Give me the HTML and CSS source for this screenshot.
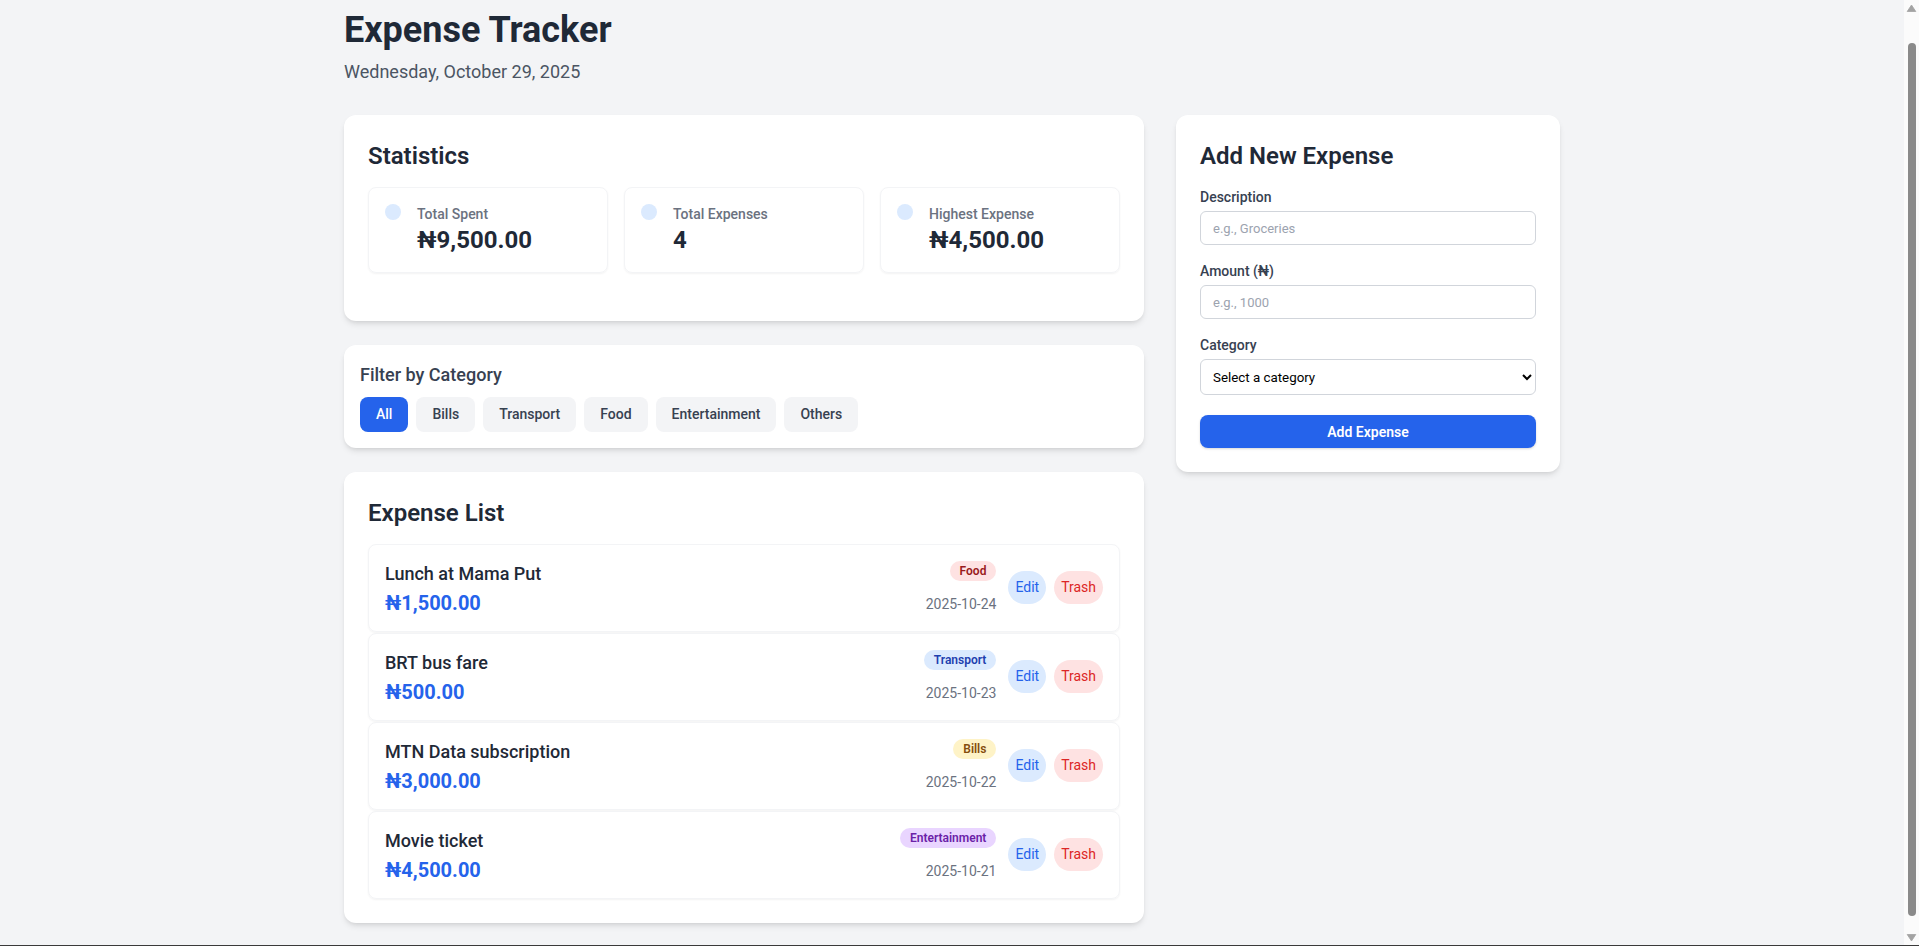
FILE: index.html
```html
<!DOCTYPE html>
<html lang="en">
<head>
<meta charset="utf-8">
<title>Expense Tracker</title>
<link rel="stylesheet" href="styles.css">
</head>
<body>
<div class="page">
  <header class="header">
    <h1 class="title">Expense Tracker</h1>
    <p class="subtitle">Wednesday, October 29, 2025</p>
  </header>
  <div class="layout">
    <div class="main-col">
      <section class="card stats-card">
        <h2 class="card-title">Statistics</h2>
        <div class="stats-grid">
          <div class="stat"><span class="stat-dot"></span><div><div class="stat-label">Total Spent</div><div class="stat-value">₦9,500.00</div></div></div>
          <div class="stat"><span class="stat-dot"></span><div><div class="stat-label">Total Expenses</div><div class="stat-value">4</div></div></div>
          <div class="stat"><span class="stat-dot"></span><div><div class="stat-label">Highest Expense</div><div class="stat-value">₦4,500.00</div></div></div>
        </div>
      </section>
      <section class="card filter-card">
        <h3 class="filter-title">Filter by Category</h3>
        <div class="filters">
          <button class="chip active">All</button>
          <button class="chip">Bills</button>
          <button class="chip">Transport</button>
          <button class="chip">Food</button>
          <button class="chip">Entertainment</button>
          <button class="chip">Others</button>
        </div>
      </section>
      <section class="card list-card">
        <h2 class="card-title">Expense List</h2>
        <div class="items">
          <div class="item">
            <div><div class="item-name">Lunch at Mama Put</div><div class="item-amount">₦1,500.00</div></div>
            <div class="item-right">
              <div class="item-meta"><span class="badge badge-food">Food</span><span class="item-date">2025-10-24</span></div>
              <div class="actions"><button class="act act-edit">Edit</button><button class="act act-trash">Trash</button></div>
            </div>
          </div>
          <div class="item">
            <div><div class="item-name">BRT bus fare</div><div class="item-amount">₦500.00</div></div>
            <div class="item-right">
              <div class="item-meta"><span class="badge badge-transport">Transport</span><span class="item-date">2025-10-23</span></div>
              <div class="actions"><button class="act act-edit">Edit</button><button class="act act-trash">Trash</button></div>
            </div>
          </div>
          <div class="item">
            <div><div class="item-name">MTN Data subscription</div><div class="item-amount">₦3,000.00</div></div>
            <div class="item-right">
              <div class="item-meta"><span class="badge badge-bills">Bills</span><span class="item-date">2025-10-22</span></div>
              <div class="actions"><button class="act act-edit">Edit</button><button class="act act-trash">Trash</button></div>
            </div>
          </div>
          <div class="item">
            <div><div class="item-name">Movie ticket</div><div class="item-amount">₦4,500.00</div></div>
            <div class="item-right">
              <div class="item-meta"><span class="badge badge-ent">Entertainment</span><span class="item-date">2025-10-21</span></div>
              <div class="actions"><button class="act act-edit">Edit</button><button class="act act-trash">Trash</button></div>
            </div>
          </div>
        </div>
      </section>
    </div>
    <aside class="card form-card">
      <h2 class="card-title">Add New Expense</h2>
      <div class="field">
        <label class="label" for="desc">Description</label>
        <input class="input" id="desc" type="text" placeholder="e.g., Groceries">
      </div>
      <div class="field">
        <label class="label" for="amt">Amount (₦)</label>
        <input class="input" id="amt" type="number" placeholder="e.g., 1000">
      </div>
      <div class="field field-last">
        <label class="label" for="cat">Category</label>
        <select class="input select" id="cat">
          <option>Select a category</option>
          <option>Food</option>
          <option>Transport</option>
          <option>Bills</option>
          <option>Entertainment</option>
          <option>Others</option>
        </select>
      </div>
      <button class="submit">Add Expense</button>
    </aside>
  </div>
</div>
<div class="scrollbar" aria-hidden="true">
  <svg class="sb-arrow" width="15" height="17" viewBox="0 0 15 17"><path d="M7.5 5 L11.8 11.5 L3.2 11.5 Z" fill="#a3a3a3" stroke="#a3a3a3" stroke-width="0.8" stroke-linejoin="round"/></svg>
  <div class="sb-track"><div class="sb-thumb"></div></div>
  <svg class="sb-arrow" width="15" height="17" viewBox="0 0 15 17"><path d="M7.5 12 L11.8 5.5 L3.2 5.5 Z" fill="#a3a3a3" stroke="#a3a3a3" stroke-width="0.8" stroke-linejoin="round"/></svg>
</div>
<div class="frame-line" aria-hidden="true"></div>
</body>
</html>
```

FILE: styles.css
```css
* { box-sizing: border-box; }
html, body { margin: 0; }
html { overflow: hidden; }
body {
  background: #f3f4f6;
  font-family: "Roboto", "Liberation Sans", sans-serif;
  color: #1f2937;
  padding-right: 15px;
}
.page { max-width: 1280px; margin: 0 auto; padding: 7px 32px 32px; }
.header { margin-bottom: 29px; }
.title { margin: 0; padding-top: 5px; font-size: 36px; line-height: 36px; font-weight: 700; color: #1f2937; }
.subtitle { margin: 10px 0 0; font-size: 18px; line-height: 28px; color: #4b5563; }

.layout { display: grid; grid-template-columns: repeat(3, minmax(0, 1fr)); gap: 32px; align-items: start; }
.main-col { grid-column: span 2; display: flex; flex-direction: column; gap: 24px; }
.card { background: #fff; border-radius: 12px; box-shadow: 0 4px 6px -1px rgba(0,0,0,.1), 0 2px 4px -2px rgba(0,0,0,.1); }
.card-title { margin: 0 0 16px; padding-top: 2px; font-size: 24px; line-height: 30px; font-weight: 600; color: #1f2937; }

.stats-card { padding: 24px; }
.stats-grid { display: grid; grid-template-columns: repeat(3, minmax(0, 1fr)); gap: 16px; margin-bottom: 24px; }
.stat { display: flex; align-items: flex-start; gap: 16px; padding: 16px; border: 1px solid #f3f4f6; border-radius: 8px; box-shadow: 0 1px 2px rgba(0,0,0,.05); }
.stat-dot { flex: none; width: 16px; height: 16px; border-radius: 50%; background: #dbeafe; }
.stat-label { font-size: 14px; line-height: 20px; font-weight: 500; color: #6b7280; }
.stat-value { font-size: 24px; line-height: 32px; font-weight: 700; color: #1f2937; }

.filter-card { padding: 16px; }
.filter-title { margin: 0 0 8px; font-size: 18px; line-height: 28px; font-weight: 500; color: #374151; }
.filters { display: flex; flex-wrap: wrap; gap: 8px; }
.chip { font-family: inherit; font-size: 14px; font-weight: 500; line-height: 18.5px; padding: 8px 16px; border: 0; border-radius: 8px; background: #f3f4f6; color: #374151; }
.chip.active { background: #2563eb; color: #fff; }

.list-card { padding: 24px; }
.items { display: flex; flex-direction: column; gap: 1px; }
.item { display: flex; align-items: center; justify-content: space-between; padding: 15px 16px; border: 1px solid #f3f4f6; border-radius: 8px; box-shadow: 0 1px 2px rgba(0,0,0,.05); }
.item-name { font-size: 18px; line-height: 28px; font-weight: 500; color: #1f2937; }
.item-amount { padding-top: 2px; font-size: 20px; line-height: 26px; font-weight: 700; color: #2563eb; }
.item-right { display: flex; align-items: center; gap: 12px; }
.item-meta { display: flex; flex-direction: column; align-items: flex-end; }
.badge { font-size: 12px; line-height: 16px; font-weight: 600; padding: 2px 10px; border-radius: 9999px; }
.badge-food { background: #fee2e2; color: #991b1b; }
.badge-transport { background: #dbeafe; color: #1e40af; }
.badge-bills { background: #fef3c7; color: #854d0e; }
.badge-ent { background: #e9d5ff; color: #6b21a8; }
.item-date { margin-top: 13px; font-size: 14px; line-height: 20px; color: #6b7280; }
.actions { display: flex; gap: 8px; }
.act { font-family: inherit; font-size: 14px; line-height: 19px; padding: 7px; border: 0; border-radius: 9999px; }
.act-edit { background: #dbeafe; color: #2563eb; }
.act-trash { background: #fee2e2; color: #dc2626; }

.form-card { padding: 24px; }
.field { margin-bottom: 16px; }
.field-last { margin-bottom: 0; }
.label { display: block; margin-bottom: 4px; font-size: 14px; line-height: 20px; font-weight: 500; color: #374151; }
.input { display: block; width: 100%; height: 34px; padding: 0 12px; border: 1px solid #d1d5db; border-radius: 6px; background: #fff; font-family: inherit; font-size: 13px; color: #1f2937; }
.input::placeholder { color: #9ca3af; }
.select { height: 36px; padding: 0 8px; color: #000; font-size: 13.33px; }
.submit { display: block; width: 100%; margin-top: 20px; height: 33px; border: 0; border-radius: 8px; background: #2563eb; color: #fff; font-family: inherit; font-size: 14px; font-weight: 600; box-shadow: 0 1px 3px rgba(0,0,0,.1), 0 1px 2px rgba(0,0,0,.06); }

.scrollbar { position: fixed; top: 0; right: 0; bottom: 0; width: 15px; display: flex; flex-direction: column; background: #fbfbfb; }
.sb-arrow { flex: none; display: block; }
.sb-track { flex: 1; display: flex; flex-direction: column; align-items: center; }
.sb-thumb { width: 8px; height: 873px; margin-top: 26px; border-radius: 4px; background: #8a8a8a; }
.frame-line { position: fixed; left: 0; right: 0; bottom: 0; height: 1px; background: #3a3a3a; }
```
